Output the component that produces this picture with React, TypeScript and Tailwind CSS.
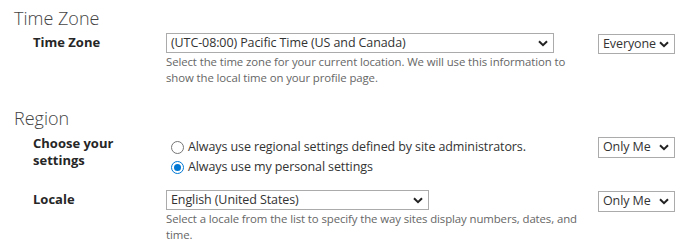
import React from 'react';

const font = { fontFamily: '"Open Sans", "Noto Sans", sans-serif' };

function Chevron() {
  return (
    <svg width="10" height="7" viewBox="0 0 10 7" className="shrink-0">
      <path d="M1 1.2 L5 5.2 L9 1.2" fill="none" stroke="#222" strokeWidth="2" />
    </svg>
  );
}

function FakeSelect({ value, className }: { value: string; className: string }) {
  return (
    <div
      className={`flex items-center justify-between border border-[#ababab] bg-white pl-[4px] pr-[5px] text-[12.5px] tracking-[-0.1px] text-[#333] ${className}`}
    >
      <span className="whitespace-nowrap leading-none">{value}</span>
      <Chevron />
    </div>
  );
}

function Radio({ checked, label }: { checked?: boolean; label: string }) {
  return (
    <label className="flex h-[20px] items-center gap-[2px] text-[12.5px] tracking-[-0.1px] text-[#333]">
      <span
        className={`flex h-[13px] w-[13px] items-center justify-center rounded-full border ${
          checked ? 'border-[#0078d4]' : 'border-[#767676]'
        }`}
      >
        {checked && <span className="h-[7px] w-[7px] rounded-full bg-[#0078d4]" />}
      </span>
      <span className="ml-[2px]">{label}</span>
    </label>
  );
}

function Row({
  label,
  children,
  privacy,
}: {
  label: React.ReactNode;
  children: React.ReactNode;
  privacy: React.ReactNode;
}) {
  return (
    <div className="grid grid-cols-[133px_432px_auto]">
      <div className="text-[13px] font-bold leading-[17px] text-[#262626]">{label}</div>
      <div>{children}</div>
      <div>{privacy}</div>
    </div>
  );
}

export default function App() {
  return (
    <div className="h-[241px] w-[695px] overflow-hidden bg-white pl-[14px] pt-[6px]" style={font}>
      <h2 className="text-[18px] font-light leading-[24px] text-[#444]">Time Zone</h2>
      <div className="mt-[3px] pl-[19px]">
        <Row
          label={<div className="pt-[1px]">Time Zone</div>}
          privacy={<FakeSelect value="Everyone" className="mt-[1px] h-[20px] w-[77px]" />}
        >
          <FakeSelect value="(UTC-08:00) Pacific Time (US and Canada)" className="h-[20px] w-[388px]" />
          <p className="mt-[1px] w-[420px] text-[11.4px] leading-[16px] tracking-[-0.1px] text-[#666]">
            Select the time zone for your current location. We will use this information to
            <br />
            show the local time on your profile page.
          </p>
        </Row>
      </div>

      <h2 className="mt-[20px] text-[18px] font-light leading-[24px] text-[#444]">Region</h2>
      <div className="mt-[4px] pl-[19px]">
        <Row
          label={
            <div className="pt-[1px]">
              Choose your
              <br />
              settings
            </div>
          }
          privacy={<FakeSelect value="Only Me" className="mt-[3px] h-[21px] w-[77px]" />}
        >
          <div className="pl-[5px] pt-[3px]">
            <Radio label="Always use regional settings defined by site administrators." />
            <Radio checked label="Always use my personal settings" />
          </div>
        </Row>
        <div className="mt-[13px]">
          <Row
            label={<div className="pt-[1px]">Locale</div>}
            privacy={<FakeSelect value="Only Me" className="mt-[1px] h-[21px] w-[77px]" />}
          >
            <FakeSelect value="English (United States)" className="h-[20px] w-[263px]" />
            <p className="mt-[1px] w-[420px] text-[11.4px] leading-[16px] tracking-[-0.1px] text-[#666]">
              Select a locale from the list to specify the way sites display numbers, dates, and
              <br />
              time.
            </p>
          </Row>
        </div>
      </div>
    </div>
  );
}
